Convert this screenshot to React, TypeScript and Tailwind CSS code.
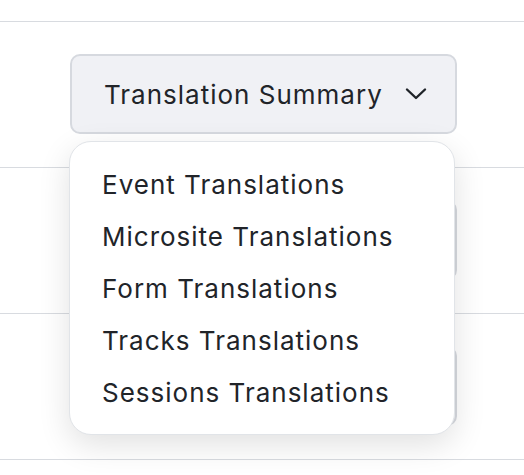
import React from "react";

const items = [
  "Event Translations",
  "Microsite Translations",
  "Form Translations",
  "Tracks Translations",
  "Sessions Translations",
];

function Chevron() {
  return (
    <svg width="22" height="14" viewBox="0 0 22 14" fill="none" className="shrink-0">
      <path d="M2 2.5 L11 11 L20 2.5" stroke="#1f2328" strokeWidth="2.4" strokeLinecap="round" strokeLinejoin="round" />
    </svg>
  );
}

function Row({ open }: { open?: boolean }) {
  return (
    <div className="relative border-t border-[#d8dbe0] pt-[32px] pb-[33px] pl-[70px]">
      <button className="flex h-[80px] w-[387px] items-center gap-[22px] rounded-[10px] border-2 border-[#d6d9df] bg-[#f0f1f5] pl-[32px] text-[26px] tracking-[1px] text-[#212429]">
        <span>Translation Summary</span>
        <Chevron />
      </button>
      {open && (
        <div className="absolute left-[69px] top-[119px] z-10 flex w-[386px] flex-col rounded-[22px] border border-[#e1e4e8] bg-white pb-[16px] pl-[32px] pt-[16px] shadow-[0_10px_32px_rgba(0,0,0,0.12)]">
          {items.map((t) => (
            <div key={t} className="flex h-[52px] items-center text-[26px] tracking-[1px] text-[#212429]">
              {t}
            </div>
          ))}
        </div>
      )}
    </div>
  );
}

export default function App() {
  return (
    <div className="min-h-[475px] w-[524px] bg-white pt-[21px] font-['Inter',sans-serif]">
      <Row open />
      <Row />
      <Row />
      <div className="border-t border-[#d8dbe0]" />
    </div>
  );
}
